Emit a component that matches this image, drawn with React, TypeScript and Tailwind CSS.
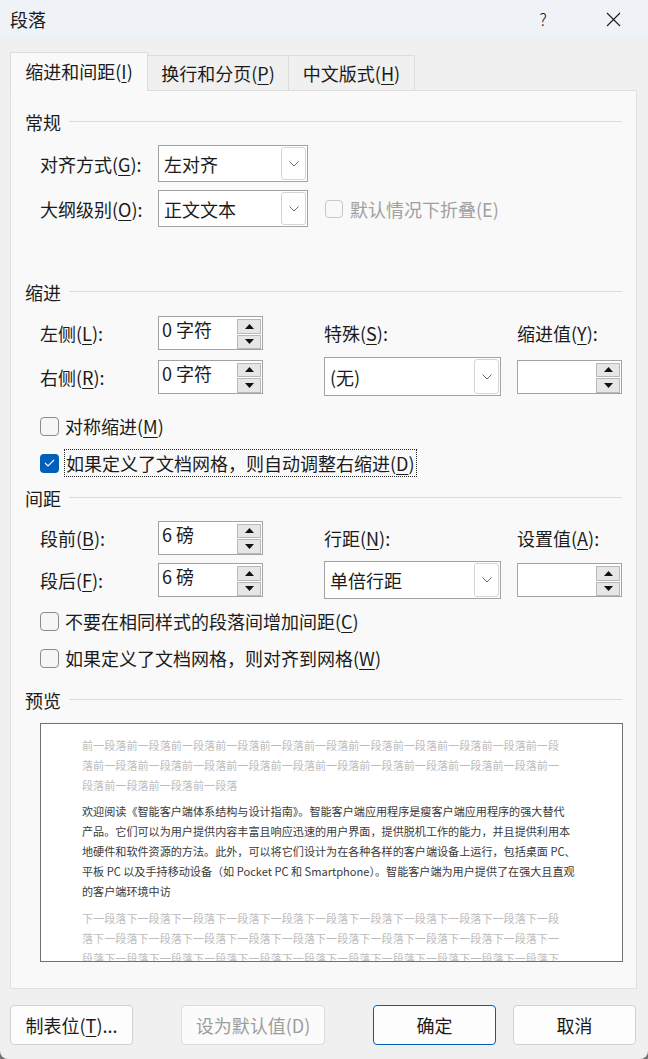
import React from 'react';

function Key({ k }: { k: string }) {
  return <span className="underline underline-offset-[3px] decoration-1">{k}</span>;
}

function Chevron() {
  return (
    <svg width="10" height="6" viewBox="0 0 10 6">
      <path d="M0.5 0.5 L5 5 L9.5 0.5" stroke="#6f6f6f" strokeWidth="1" fill="none" />
    </svg>
  );
}

function Select({ value, w, h }: { value: string; w: string; h: string }) {
  return (
    <div className={`${w} ${h} bg-white border border-[#a3a3a3] flex items-center pl-[5px] pr-[1px] py-[1px]`}>
      <span className="flex-1">{value}</span>
      <div className="w-[25px] h-full border border-[#d4d4d4] rounded-[3px] flex items-center justify-center">
        <Chevron />
      </div>
    </div>
  );
}

function Arrow({ up }: { up?: boolean }) {
  return (
    <svg width="9" height="5" viewBox="0 0 9 5">
      <polygon points={up ? '0,5 4.5,0 9,5' : '0,0 9,0 4.5,5'} fill="#111" />
    </svg>
  );
}

function Spinner({ value }: { value: string }) {
  return (
    <div className="w-[105px] h-[34px] bg-white border border-[#a3a3a3] flex pl-[3px] pr-[1px] pt-[1px]">
      <span className="flex-1 leading-[22px]">{value}</span>
      <div className="w-[24px] flex flex-col gap-px pt-px">
        <div className="h-[15px] bg-[#e6e6e6] border border-[#b8b8b8] flex items-center justify-center">
          <Arrow up />
        </div>
        <div className="h-[15px] bg-[#e6e6e6] border border-[#b8b8b8] flex items-center justify-center">
          <Arrow />
        </div>
      </div>
    </div>
  );
}

function Box({ checked }: { checked?: boolean }) {
  if (checked) {
    return (
      <div className="w-[19px] h-[19px] rounded-[4px] bg-[#005fb8] flex items-center justify-center">
        <svg width="11" height="8" viewBox="0 0 11 8">
          <path d="M1 4 L4 7 L10 1" stroke="#fff" strokeWidth="1.1" fill="none" />
        </svg>
      </div>
    );
  }
  return <div className="w-[19px] h-[19px] rounded-[4px] border border-[#8c8c8c] bg-[#f6f6f6]" />;
}

function Heading({ text }: { text: string }) {
  return (
    <div className="h-[24px] flex items-center">
      <span>{text}</span>
      <div className="flex-1 h-px bg-[#dcdcdc] ml-[8px] -mt-[1px]" />
    </div>
  );
}

const grayTop = [
  '前一段落前一段落前一段落前一段落前一段落前一段落前一段落前一段落前一段落前一段落前一段',
  '落前一段落前一段落前一段落前一段落前一段落前一段落前一段落前一段落前一段落前一段落前一',
  '段落前一段落前一段落前一段落',
];

const mainText = [
  '欢迎阅读《智能客户端体系结构与设计指南》。智能客户端应用程序是瘦客户端应用程序的强大替代',
  '产品。它们可以为用户提供内容丰富且响应迅速的用户界面，提供脱机工作的能力，并且提供利用本',
  '地硬件和软件资源的方法。此外，可以将它们设计为在各种各样的客户端设备上运行，包括桌面 PC、',
  '平板 PC 以及手持移动设备（如 Pocket PC 和 Smartphone）。智能客户端为用户提供了在强大且直观',
  '的客户端环境中访',
];

const grayBottom = [
  '下一段落下一段落下一段落下一段落下一段落下一段落下一段落下一段落下一段落下一段落下一段',
  '落下一段落下一段落下一段落下一段落下一段落下一段落下一段落下一段落下一段落下一段落下一',
  '段落下一段落下一段落下一段落下一段落下一段落下一段落下一段落下一段落下一段落下一段落下',
];

export default function App() {
  return (
    <div className="w-[648px] h-[1059px] bg-[#767676]">
      <div className="w-[648px] h-[1059px] bg-[#f0f0f0] rounded-b-[8px] overflow-hidden flex flex-col text-[18px] leading-[24px] text-[#1b1b1b] font-['Noto_Sans_CJK_SC','Noto_Sans',sans-serif]">
        {/* Title bar */}
        <div className="h-[38px] bg-[#eff3f8] flex items-center shrink-0">
          <span className="ml-[10px] text-[18px]">段落</span>
          <div className="ml-auto w-[46px] flex justify-center text-[17px] font-light">?</div>
          <div className="ml-[24px] mr-[12px] w-[46px] flex justify-center">
            <svg width="15" height="15" viewBox="0 0 15 15">
              <path d="M1 1 L14 14 M14 1 L1 14" stroke="#1b1b1b" strokeWidth="1.1" />
            </svg>
          </div>
        </div>

        {/* Tabs */}
        <div className="mt-[14px] ml-[10px] h-[39px] flex items-end relative z-10 -mb-px">
          <div className="w-[138px] h-[39px] bg-[#f9f9f9] border border-b-0 border-[#dcdcdc] flex items-center justify-center pb-[2px]">
            缩进和间距(<Key k="I" />)
          </div>
          <div className="w-[141px] h-[36px] bg-[#f0f0f0] border border-l-0 border-[#dcdcdc] flex items-center justify-center">
            换行和分页(<Key k="P" />)
          </div>
          <div className="w-[126px] h-[36px] bg-[#f0f0f0] border border-l-0 border-[#dcdcdc] flex items-center justify-center">
            中文版式(<Key k="H" />)
          </div>
        </div>

        {/* Panel */}
        <div className="ml-[10px] w-[627px] bg-[#f9f9f9] border border-[#e0e0e0] pl-[14px] pr-[14px] pt-[19px] pb-[26px]">
          <Heading text="常规" />
          <div className="mt-[11px] h-[37px] flex items-center pl-[15px]">
            <div className="w-[118px]">对齐方式(<Key k="G" />):</div>
            <Select value="左对齐" w="w-[150px]" h="h-[37px]" />
          </div>
          <div className="mt-[8px] h-[37px] flex items-center pl-[15px]">
            <div className="w-[118px]">大纲级别(<Key k="O" />):</div>
            <Select value="正文文本" w="w-[150px]" h="h-[37px]" />
            <div className="ml-[17px] w-[18px] h-[18px] rounded-[4px] border border-[#c8c8c8]" />
            <span className="ml-[7px] text-[#a0a0a0]">默认情况下折叠(E)</span>
          </div>

          <div className="mt-[53px]">
            <Heading text="缩进" />
          </div>
          <div className="mt-[12px] h-[34px] flex items-center pl-[15px]">
            <div className="w-[118px]">左侧(<Key k="L" />):</div>
            <Spinner value="0 字符" />
            <div className="ml-[61px] w-[193px]">特殊(<Key k="S" />):</div>
            <div>缩进值(<Key k="Y" />):</div>
          </div>
          <div className="mt-[7px] h-[39px] flex items-center pl-[15px]">
            <div className="w-[118px]">右侧(<Key k="R" />):</div>
            <Spinner value="0 字符" />
            <div className="ml-[61px]">
              <Select value="(无)" w="w-[177px]" h="h-[39px]" />
            </div>
            <div className="ml-[16px]">
              <Spinner value="" />
            </div>
          </div>
          <div className="mt-[18px] h-[24px] flex items-center pl-[15px]">
            <Box />
            <span className="ml-[6px]">对称缩进(<Key k="M" />)</span>
          </div>
          <div className="mt-[11px] h-[28px] flex items-center pl-[15px]">
            <Box checked />
            <span className="ml-[5px] h-[28px] flex items-center px-[1px] border border-dotted border-[#222]">
              如果定义了文档网格，则自动调整右缩进(<Key k="D" />)
            </span>
          </div>

          <div className="mt-[9px]">
            <Heading text="间距" />
          </div>
          <div className="mt-[10px] h-[35px] flex items-center pl-[15px]">
            <div className="w-[118px]">段前(<Key k="B" />):</div>
            <Spinner value="6 磅" />
            <div className="ml-[61px] w-[193px]">行距(<Key k="N" />):</div>
            <div>设置值(<Key k="A" />):</div>
          </div>
          <div className="mt-[6px] h-[38px] flex items-center pl-[15px]">
            <div className="w-[118px]">段后(<Key k="F" />):</div>
            <Spinner value="6 磅" />
            <div className="ml-[61px]">
              <Select value="单倍行距" w="w-[177px]" h="h-[38px]" />
            </div>
            <div className="ml-[16px]">
              <Spinner value="" />
            </div>
          </div>
          <div className="mt-[10px] h-[24px] flex items-center pl-[15px]">
            <Box />
            <span className="ml-[6px]">不要在相同样式的段落间增加间距(<Key k="C" />)</span>
          </div>
          <div className="mt-[13px] h-[24px] flex items-center pl-[15px]">
            <Box />
            <span className="ml-[6px]">如果定义了文档网格，则对齐到网格(<Key k="W" />)</span>
          </div>

          <div className="mt-[18px]">
            <Heading text="预览" />
          </div>
          <div className="mt-[11px] ml-[15px] w-[583px] h-[239px] bg-white border border-[#707070] overflow-hidden pl-[41px] pt-[11px] text-[11.1px] leading-[20px] whitespace-nowrap">
            <div className="text-[#bdbdbd]">
              {grayTop.map((l, i) => (
                <div key={i}>{l}</div>
              ))}
            </div>
            <div className="mt-[6px] text-[#3a3a3a]">
              {mainText.map((l, i) => (
                <div key={i}>{l}</div>
              ))}
            </div>
            <div className="mt-[7px] text-[#bdbdbd]">
              {grayBottom.map((l, i) => (
                <div key={i}>{l}</div>
              ))}
            </div>
          </div>
        </div>

        {/* Buttons */}
        <div className="mt-[16px] ml-[10px] flex items-center">
          <button className="w-[123px] h-[40px] rounded-[4px] border border-[#d1d1d1] bg-[#fdfdfd]">
            制表位(<Key k="T" />)...
          </button>
          <button className="ml-[48px] w-[144px] h-[40px] rounded-[4px] border border-[#dcdcdc] bg-[#fbfbfb] text-[#9d9d9d]">
            设为默认值(D)
          </button>
          <button className="ml-[48px] w-[123px] h-[40px] rounded-[4px] border border-[#005fb8] bg-[#fdfdfd]">
            确定
          </button>
          <button className="ml-[17px] w-[123px] h-[40px] rounded-[4px] border border-[#d1d1d1] bg-[#fdfdfd]">
            取消
          </button>
        </div>
      </div>
    </div>
  );
}
